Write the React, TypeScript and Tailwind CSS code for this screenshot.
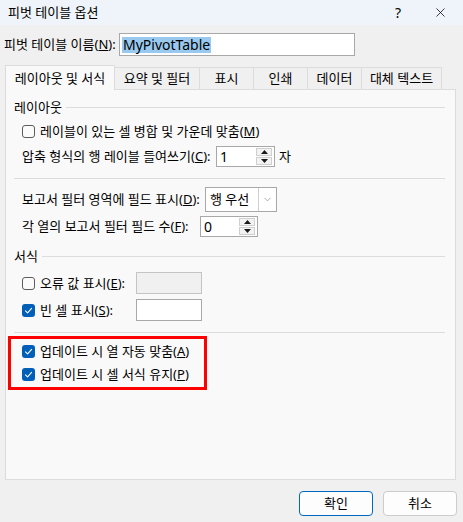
import { X, ChevronDown } from 'lucide-react';
import type { ReactNode } from 'react';

const font = { fontFamily: '"Noto Sans", "Noto Sans CJK KR", sans-serif' };

function U({ children }: { children: ReactNode }) {
  return <span className="underline underline-offset-[1px]">{children}</span>;
}

function CheckBox({ checked }: { checked?: boolean }) {
  return checked ? (
    <span className="w-[13px] h-[13px] rounded-[3px] bg-[#005fb8] flex items-center justify-center shrink-0">
      <svg width="9" height="9" viewBox="0 0 9 9" fill="none">
        <path d="M1.5 4.8 L3.6 6.8 L7.6 2.4" stroke="white" strokeWidth="1.1" strokeLinecap="round" strokeLinejoin="round" />
      </svg>
    </span>
  ) : (
    <span className="w-[13px] h-[13px] rounded-[3px] border border-[#5c5c5c] bg-[#fbfbfb] shrink-0" />
  );
}

function Spin({ value, width }: { value: string; width: string }) {
  return (
    <div className={`${width} h-[21px] border border-[#a8a8a8] bg-white flex items-center shrink-0`}>
      <span className="flex-1 pl-[3px] text-[14px] leading-none">{value}</span>
      <div className="w-[16px] h-[19px] mr-[2px] flex flex-col gap-px py-[1px]">
        <div className="flex-1 bg-[#f3f3f3] border border-[#cfcfcf] flex items-center justify-center">
          <svg width="7" height="4" viewBox="0 0 7 4"><path d="M0 4 L3.5 0 L7 4 Z" fill="#1a1a1a" /></svg>
        </div>
        <div className="flex-1 bg-[#f3f3f3] border border-[#cfcfcf] flex items-center justify-center">
          <svg width="7" height="4" viewBox="0 0 7 4"><path d="M0 0 L3.5 4 L7 0 Z" fill="#1a1a1a" /></svg>
        </div>
      </div>
    </div>
  );
}

function GroupHeader({ title }: { title: string }) {
  return (
    <div className="h-[16px] flex items-center gap-[4px] pl-[8px] pr-[10px]">
      <span className="text-[13px] leading-none">{title}</span>
      <div className="flex-1 h-px bg-[#dcdcdc]" />
    </div>
  );
}

function Separator({ className }: { className: string }) {
  return <div className={`h-px bg-[#dcdcdc] ml-[8px] mr-[10px] ${className}`} />;
}

const tabs = [
  { label: '레이아웃 및 서식', w: 'w-[110px]' },
  { label: '요약 및 필터', w: 'w-[85px]' },
  { label: '표시', w: 'w-[54px]' },
  { label: '인쇄', w: 'w-[54px]' },
  { label: '데이터', w: 'w-[54px]' },
  { label: '대체 텍스트', w: 'w-[80px]' },
];

export default function App() {
  return (
    <div className="w-[463px] h-[522px] bg-[#f0f0f0] flex flex-col text-[#000] overflow-hidden whitespace-nowrap" style={font}>
      {/* title bar */}
      <div className="h-[25px] bg-[#eef4f9] flex items-center pl-[8px] shrink-0">
        <span className="text-[13px] leading-none">피벗 테이블 옵션</span>
        <span className="ml-auto text-[14px] leading-none mr-[32px]">?</span>
        <X className="w-[15px] h-[15px] mr-[15px]" strokeWidth={1.2} />
      </div>

      {/* name */}
      <div className="mt-[8px] h-[23px] flex items-center pl-[4px]">
        <span className="w-[115px] text-[13px] leading-none">
          피벗 테이블 이름(<U>N</U>):
        </span>
        <div className="w-[236px] h-[23px] border border-[#a8a8a8] bg-white flex items-center pl-[2px]">
          <span className="bg-[#99c9ef] text-[14px] leading-[16px] px-px">MyPivotTable</span>
        </div>
      </div>

      {/* tabs */}
      <div className="mt-[9px] ml-[5px] h-[25px] flex items-end -mb-px relative z-10">
        {tabs.map((t, i) =>
          i === 0 ? (
            <div
              key={t.label}
              className={`${t.w} h-[25px] bg-[#f9f9f9] border border-b-0 border-[#dcdcdc] flex items-center justify-center text-[13px] leading-none`}
            >
              {t.label}
            </div>
          ) : (
            <div
              key={t.label}
              className={`${t.w} h-[22px] mb-px bg-[#f0f0f0] border border-l-0 border-b-0 border-[#dcdcdc] flex items-center justify-center text-[13px] leading-none`}
            >
              {t.label}
            </div>
          )
        )}
      </div>

      {/* panel */}
      <div className="ml-[5px] w-[451px] h-[391px] bg-[#f9f9f9] border border-[#dcdcdc] flex flex-col shrink-0">
        <div className="mt-[9px]">
          <GroupHeader title="레이아웃" />
        </div>

        <div className="mt-[7px] h-[18px] pl-[16px] flex items-center gap-[5px] text-[13px] leading-none">
          <CheckBox />
          <span>
            레이블이 있는 셀 병합 및 가운데 맞춤(<U>M</U>)
          </span>
        </div>

        <div className="mt-[6px] h-[21px] pl-[16px] flex items-center text-[13px] leading-none">
          <span className="w-[194px] shrink-0">
            압축 형식의 행 레이블 들여쓰기(<U>C</U>):
          </span>
          <Spin value="1" width="w-[59px]" />
          <span className="ml-[4px]">자</span>
        </div>

        <Separator className="mt-[11px]" />

        <div className="mt-[8px] h-[25px] pl-[16px] flex items-center text-[13px] leading-none">
          <span className="w-[183px] shrink-0">
            보고서 필터 영역에 필드 표시(<U>D</U>):
          </span>
          <div className="w-[72px] h-[25px] border border-[#a8a8a8] bg-white flex items-center shrink-0">
            <span className="flex-1 pl-[4px]">행 우선</span>
            <div className="w-[18px] h-[23px] border-l border-[#cfcfcf] flex items-center justify-center">
              <ChevronDown className="w-[11px] h-[11px] text-[#7a7a7a]" strokeWidth={1.3} />
            </div>
          </div>
        </div>

        <div className="mt-[4px] h-[21px] pl-[16px] flex items-center text-[13px] leading-none">
          <span className="w-[178px] shrink-0">
            각 열의 보고서 필터 필드 수(<U>F</U>):
          </span>
          <Spin value="0" width="w-[58px]" />
        </div>

        <div className="mt-[11px]">
          <GroupHeader title="서식" />
        </div>

        <div className="mt-[8px] h-[22px] pl-[16px] flex items-center text-[13px] leading-none">
          <div className="w-[114px] shrink-0 flex items-center gap-[5px]">
            <CheckBox />
            <span>
              오류 값 표시(<U>E</U>):
            </span>
          </div>
          <div className="w-[66px] h-[22px] border border-[#c4c4c4] bg-[#f0f0f0]" />
        </div>

        <div className="mt-[5px] h-[22px] pl-[16px] flex items-center text-[13px] leading-none">
          <div className="w-[114px] shrink-0 flex items-center gap-[5px]">
            <CheckBox checked />
            <span>
              빈 셀 표시(<U>S</U>):
            </span>
          </div>
          <div className="w-[66px] h-[22px] border border-[#a8a8a8] bg-white" />
        </div>

        <Separator className="mt-[11px]" />

        <div className="mt-[3px] ml-[2px] w-[199px] h-[54px] border-[3px] border-[#ff0000] flex flex-col pl-[11px] pt-[3px] gap-[5px] text-[13px] leading-none">
          <div className="h-[18px] flex items-center gap-[5px]">
            <CheckBox checked />
            <span>
              업데이트 시 열 자동 맞춤(<U>A</U>)
            </span>
          </div>
          <div className="h-[18px] flex items-center gap-[5px]">
            <CheckBox checked />
            <span>
              업데이트 시 셀 서식 유지(<U>P</U>)
            </span>
          </div>
        </div>
      </div>

      {/* buttons */}
      <div className="mt-[11px] flex justify-end gap-[10px] pr-[6px]">
        <button className="w-[74px] h-[25px] rounded-[4px] bg-[#fdfdfd] border border-[#0067c0] text-[13px] leading-none flex items-center justify-center">
          확인
        </button>
        <button className="w-[74px] h-[25px] rounded-[4px] bg-[#fdfdfd] border border-[#cccccc] text-[13px] leading-none flex items-center justify-center">
          취소
        </button>
      </div>
    </div>
  );
}
